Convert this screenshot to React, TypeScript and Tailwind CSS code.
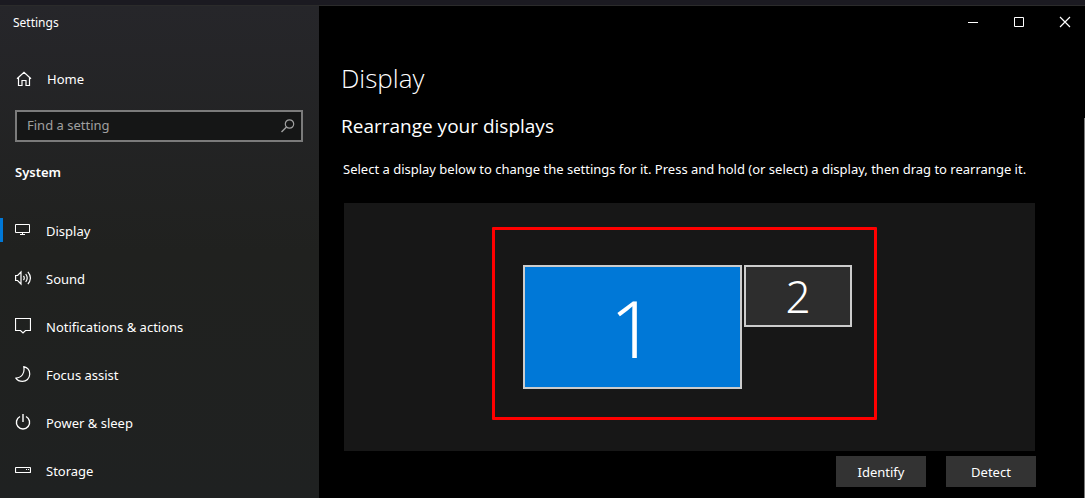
import type { ReactNode } from "react";

interface NavItem {
  label: string;
  icon: ReactNode;
}

interface Monitor {
  id: number;
  className: string;
}

function Icon({ children, className = "" }: { children: ReactNode; className?: string }) {
  return (
    <svg
      aria-hidden="true"
      width="16"
      height="16"
      viewBox="0 0 16 16"
      fill="none"
      stroke="currentColor"
      className={`shrink-0 ${className}`}
    >
      {children}
    </svg>
  );
}

const navItems: NavItem[] = [
  {
    label: "Display",
    icon: <path d="M.5 2.5h14v8H.5zM7.5 10.5v2M5 12.5h5" />,
  },
  {
    label: "Sound",
    icon: (
      <path
        d="M.6 5.5h2l3.400-3.500v12l-3.400-3.500h-2zM8.500 5.800q1.500 2.200 0 4.400M10.700 4q3 4 0 8M12.900 1.800q5 6.200 0 12.400"
        strokeWidth="1.2"
      />
    ),
  },
  {
    label: "Notifications & actions",
    icon: <path d="M.5.5h15v12h-5l-2.500 2.500-2.500-2.500h-5z" strokeWidth="1.2" />,
  },
  {
    label: "Focus assist",
    icon: (
      <path
        d="M8.700.700c4 1 6.200 4 6 7.800-.2 4-3.300 6.900-7.200 6.900-2.800 0-5.300-1.200-6.700-3.300 5.700-.2 9.400-4.900 7.900-11.400z"
        strokeLinejoin="round"
        strokeWidth="1.2"
      />
    ),
  },
  {
    label: "Power & sleep",
    icon: <path d="M8 0v8M5 2.500a6.600 6.600 0 1 0 6 0" strokeWidth="1.4" />,
  },
  {
    label: "Storage",
    icon: (
      <>
        <rect x=".5" y="5.500" width="15" height="5" rx=".5" strokeWidth="1.2" />
        <path d="M11 7.500h1M13 7.500h1" />
      </>
    ),
  },
];

const monitors: Monitor[] = [
  { id: 1, className: "h-[124px] w-[219px] bg-[#0078d7] text-[80px]" },
  { id: 2, className: "h-[62px] w-[108px] bg-[#2d2d2d] text-[44px]" },
];

const windowControls: NavItem[] = [
  { label: "Minimize", icon: <path d="M3 8.500h10" /> },
  { label: "Maximize", icon: <path d="M3.500 3.500h9v9h-9z" /> },
  { label: "Close", icon: <path d="M3 3l10 10M13 3L3 13" strokeWidth="1.2" /> },
];

function Sidebar() {
  return (
    <aside className="w-[319px] shrink-0 bg-linear-to-b from-[#26262a] via-[#20211f] to-[#1f2121]">
      <div className="flex h-[34px] items-center pl-[13px] text-xs">Settings</div>
      <a href="#home" className="mt-4 flex h-12 items-center gap-[15px] pl-4">
        <Icon className="mb-0.5">
          <path d="M1 7.800L8 1.200l7 6.600M2.500 6.500v8h3.500v-5h4v5h3.500v-8" strokeWidth="1.2" />
        </Icon>
        Home
      </a>
      <div className="mt-1.5 mr-4 ml-[15px] flex h-8 items-center border-2 border-[#7b7b7b] bg-[#151616] pr-[5px] pl-2.5">
        <input
          type="search"
          aria-label="Find a setting"
          placeholder="Find a setting"
          className="min-w-0 flex-1 bg-transparent outline-none placeholder:text-[#a0a0a0]"
        />
        <Icon className="text-[#a0a0a0]">
          <circle cx="9.500" cy="6" r="4.200" strokeWidth="1.2" />
          <path d="M6.500 9L1.500 14" strokeWidth="1.4" />
        </Icon>
      </div>
      <h2 className="mt-5 pl-[15px] leading-5 font-semibold">System</h2>
      <nav className="mt-[26px]">
        {navItems.map((item, i) => (
          <a
            key={item.label}
            href="#settings"
            aria-current={i === 0 ? "page" : undefined}
            className="flex h-12 items-center"
          >
            <span className={`mb-1 h-6 w-[3px] ${i === 0 ? "bg-[#0078d7]" : ""}`} />
            <Icon className="mr-[15px] mb-1 ml-3">{item.icon}</Icon>
            {item.label}
          </a>
        ))}
      </nav>
    </aside>
  );
}

function MonitorCanvas() {
  return (
    <div className="mt-6 flex justify-center bg-[#171717] py-[62px] pr-1">
      <div className="relative flex items-start gap-[2px]">
        {monitors.map((m) => (
          <button
            key={m.id}
            type="button"
            className={`flex items-center justify-center border-2 border-[#cccccc] leading-none font-light ${m.className}`}
          >
            {m.id}
          </button>
        ))}
        <div className="pointer-events-none absolute -top-[38px] -right-[25px] -bottom-[31px] -left-[31px] rounded-[1px] border-3 border-[#ff0000]" />
      </div>
    </div>
  );
}

export default function App() {
  return (
    <div className="flex h-screen flex-col overflow-hidden bg-black font-['Noto_Sans','Open_Sans',sans-serif] text-[13px] text-white">
      <div className="h-1.5 shrink-0 border-b border-[#2b2b2b] bg-[#1b1a21]" />
      <div className="flex min-h-0 flex-1">
        <Sidebar />
        <main className="flex min-w-0 flex-1 flex-col">
          <header className="flex h-8 shrink-0 items-center justify-end gap-3.5 pr-1">
            {windowControls.map((c) => (
              <button
                key={c.label}
                type="button"
                aria-label={c.label}
                className="flex h-8 w-8 items-center justify-center"
              >
                <Icon>{c.icon}</Icon>
              </button>
            ))}
          </header>
          <div className="flex min-h-0 flex-1">
            <div className="min-w-0 flex-1 pr-12 pl-6">
              <h1 className="mt-5 -ml-0.5 font-['Open_Sans','Noto_Sans',sans-serif] text-[26px] leading-10 font-light">
                Display
              </h1>
              <h2 className="mt-3.5 -ml-0.5 font-['Open_Sans','Noto_Sans',sans-serif] text-[19px] leading-7">
                Rearrange your displays
              </h2>
              <p className="mt-[19px] leading-5 whitespace-nowrap">
                Select a display below to change the settings for it. Press and hold (or select) a
                display, then drag to rearrange it.
              </p>
              <div className="mx-px">
                <MonitorCanvas />
              </div>
              <div className="mt-[5px] flex justify-end gap-5">
                <button type="button" className="h-[31px] w-[90px] bg-[#333333] pt-0.5">
                  Identify
                </button>
                <button type="button" className="h-[31px] w-[90px] bg-[#333333] pt-0.5">
                  Detect
                </button>
              </div>
            </div>
            <div className="mt-20 w-px bg-[#7a7a7a]" />
          </div>
        </main>
      </div>
    </div>
  );
}
